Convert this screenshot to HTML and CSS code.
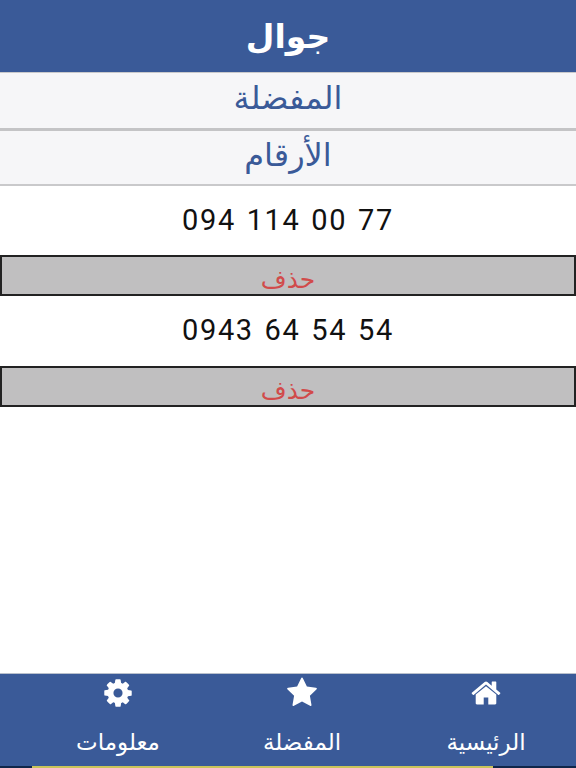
FILE: index.html
```html
<!DOCTYPE html>
<html lang="ar" dir="rtl">
<head>
    <meta charset="UTF-8">
    <meta name="viewport" content="width=device-width, initial-scale=1.0">
    <title>جوال</title>
    <link rel="stylesheet" href="styles.css">
</head>
<body>
    <div class="page">
        <header class="header">
            <h1>جوال</h1>
        </header>
        <main class="content">
            <div class="section-title first">المفضلة</div>
            <div class="section-title">الأرقام</div>

            <div class="number" dir="ltr">094 114 00 77</div>
            <button class="delete">حذف</button>
            <div class="number" dir="ltr">0943 64 54 54</div>
            <button class="delete">حذف</button>
        </main>
        <nav class="tabs">
            <a class="tab">
                <svg class="tab-icon" viewBox="0 0 1792 1792"><path d="M1472 992v480q0 26-19 45t-45 19h-384v-384h-256v384h-384q-26 0-45-19t-19-45v-480q0-1 .5-3t.5-3l575-474 575 474q1 2 1 6zm223-69l-62 74q-8 9-21 11h-3q-13 0-21-7l-692-577-692 577q-12 8-24 7-13-2-21-11l-62-74q-8-10-7-23.500t11-21.500l719-599q32-26 76-26t76 26l244 204v-195q0-14 9-23t23-9h192q14 0 23 9t9 23v408l219 182q10 8 11 21.500t-7 23.500z"/></svg>
                <span>الرئيسية</span>
            </a>
            <a class="tab">
                <svg class="tab-icon" viewBox="0 0 1792 1792"><path d="M1728 647q0 22-26 48l-363 354 86 500q1 7 1 20 0 21-10.500 35.500t-30.500 14.500q-19 0-40-12l-449-236-449 236q-22 12-40 12-21 0-31.500-14.500t-10.500-35.500q0-6 2-20l86-500-364-354q-25-27-25-48 0-37 56-46l502-73 225-455q19-41 49-41t49 41l225 455 502 73q56 9 56 46z"/></svg>
                <span>المفضلة</span>
            </a>
            <a class="tab">
                <svg class="tab-icon" viewBox="0 0 1792 1792"><path d="M1152 896q0-106-75-181t-181-75-181 75-75 181 75 181 181 75 181-75 75-181zm512-109v222q0 12-8 23t-20 13l-185 28q-19 54-39 91 35 50 107 138 10 12 10 25t-9 23q-27 37-99 108t-94 71q-12 0-26-9l-138-108q-44 23-91 38-16 136-29 186-7 28-36 28h-222q-14 0-24.500-8.500t-11.500-21.500l-28-184q-49-16-90-37l-141 107q-10 9-25 9-14 0-25-11-126-114-165-168-7-10-7-23 0-12 8-23 15-21 51-66.500t54-70.500q-27-50-41-99l-183-27q-13-2-21-12.500t-8-23.500v-222q0-12 8-23t19-13l186-28q14-46 39-92-40-57-107-138-10-12-10-24 0-10 9-23 26-36 98.500-107.500t94.500-71.500q13 0 26 10l138 107q44-23 91-38 16-136 29-186 7-28 36-28h222q14 0 24.500 8.500t11.500 21.500l28 184q49 16 90 37l142-107q9-9 24-9 13 0 25 10 129 119 165 170 7 8 7 22 0 12-8 23-15 21-51 66.500t-54 70.500q26 50 41 98l183 28q13 2 21 12.500t8 23.500z"/></svg>
                <span>معلومات</span>
            </a>
        </nav>
        <div class="bottom-strip"><div class="ad-edge"></div></div>
    </div>
</body>
</html>
```

FILE: styles.css
```css
* {
    box-sizing: border-box;
}
html, body {
    margin: 0;
    height: 100%;
    overflow: hidden;
}
body {
    font-family: "DejaVu Sans", sans-serif;
    background-color: #fff;
}
.page {
    display: flex;
    flex-direction: column;
    height: 768px;
}
.header {
    height: 72px;
    display: flex;
    align-items: center;
    justify-content: center;
    background-color: #3a5a98;
}
.header h1 {
    margin: 0;
    color: #fff;
    font-size: 33px;
    font-weight: bold;
}
.content {
    flex: 1;
}
.section-title {
    height: 55px;
    padding-bottom: 5px;
    display: flex;
    align-items: center;
    justify-content: center;
    color: #3a5a98;
    font-size: 32px;
    background-color: #f6f6f8;
    border-bottom: 2px solid #c9c9cb;
}
.section-title.first {
    height: 59px;
    border-top: 1px solid #c9c9cb;
    border-bottom: 3px solid #c4c4c6;
}
.number {
    height: 70px;
    padding-bottom: 2px;
    display: flex;
    align-items: center;
    justify-content: center;
    color: #111;
    font-family: Roboto, sans-serif;
    font-size: 29px;
    word-spacing: 2px;
    letter-spacing: 1.65px;
}
.section-title + .number {
    height: 69px;
    padding-bottom: 1px;
}
.delete {
    display: block;
    width: 100%;
    height: 41px;
    padding: 7px 0 0;
    color: #d14b4b;
    font-family: inherit;
    font-size: 25px;
    background-color: #c0bfc0;
    border: 2px solid #222;
}
.tabs {
    height: 93px;
    padding-left: 28px;
    display: grid;
    grid-template-columns: 180px 188px 180px;
    background-color: #3a5a98;
    border-top: 1px solid #b9c0cc;
}
.tab {
    display: flex;
    flex-direction: column;
    align-items: center;
    gap: 20px;
    padding-top: 3px;
    color: #fff;
    font-size: 23px;
}
.tab-icon {
    width: 32px;
    height: 32px;
    fill: #fff;
}
.bottom-strip {
    height: 2px;
    padding: 0 83px 0 32px;
    background-color: #10264a;
}
.ad-edge {
    height: 2px;
    background-color: #c9c45a;
}
```
